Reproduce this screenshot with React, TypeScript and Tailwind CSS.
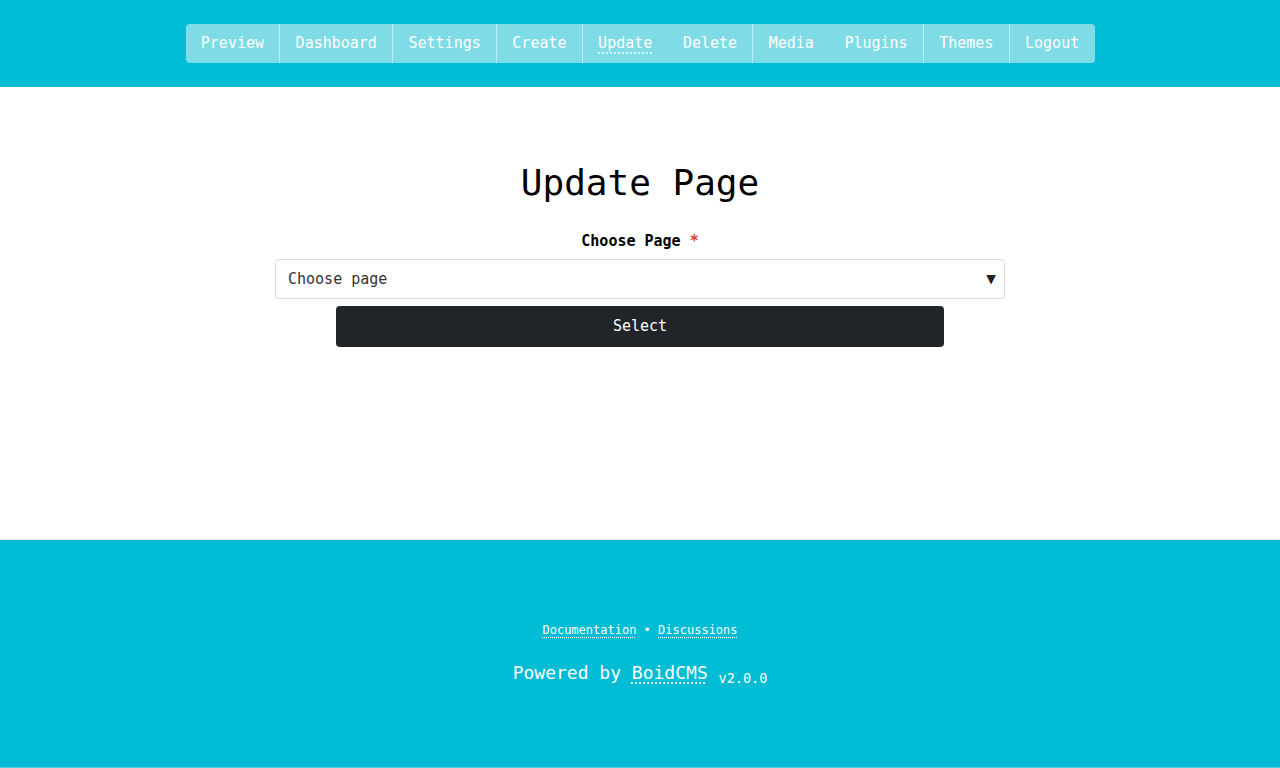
const NAV = [
  { label: 'Preview', border: false },
  { label: 'Dashboard', border: true },
  { label: 'Settings', border: true },
  { label: 'Create', border: true },
  { label: 'Update', border: true, active: true },
  { label: 'Delete', border: false },
  { label: 'Media', border: true },
  { label: 'Plugins', border: false },
  { label: 'Themes', border: true },
  { label: 'Logout', border: true },
];

export default function App() {
  return (
    <div className="flex flex-col min-h-[768px] bg-white font-['DejaVu_Sans_Mono',monospace]">
      <header className="bg-[#00bcd4] h-[87px] flex justify-center pt-6">
        <nav className="flex h-[39px] rounded-[4px] bg-[#7fdbe6] text-[15px] text-white">
          {NAV.map((item) => (
            <a
              key={item.label}
              className={
                'flex items-center px-[15.3px] ' +
                (item.border ? 'border-l border-[#bfeef4] ' : '') +
                (item.active ? 'underline decoration-dotted underline-offset-[4px]' : '')
              }
            >
              {item.label}
            </a>
          ))}
        </nav>
      </header>

      <main className="flex flex-col items-center pt-[74px] h-[453px] border-b border-[#e2e2e2]">
        <h1 className="text-[36px] leading-[43px] text-black">Update Page</h1>
        <label className="mt-[26px] text-[15px] leading-[22px] font-bold text-black">
          Choose Page <span className="text-[#e53935]">*</span>
        </label>
        <div className="mt-[7px] w-[730px] h-10 flex items-center justify-between pl-3 pr-[8px] border border-[#dcdcdc] rounded-[4px] text-[15px] text-[#333]">
          <span>Choose page</span>
          <span className="text-[16px] text-[#222]">▼</span>
        </div>
        <button
          type="button"
          className="mt-[7px] w-[608px] h-[41px] rounded-[4px] bg-[#212529] text-white text-[15px]"
        >
          Select
        </button>
      </main>

      <footer className="bg-[#00bcd4] h-[228px] pt-[81px] flex flex-col items-center text-white border-b border-[#4fd0e0]">
        <p className="text-[12px] leading-[18px]">
          <a className="underline decoration-dotted underline-offset-[3px]">Documentation</a>
          {' • '}
          <a className="underline decoration-dotted underline-offset-[3px]">Discussions</a>
        </p>
        <p className="mt-[20px] text-[18px] leading-[27px]">
          Powered by{' '}
          <a className="underline decoration-dotted underline-offset-[4px]">BoidCMS</a>{' '}
          <small className="text-[13.5px] align-[-4px]">v2.0.0</small>
        </p>
      </footer>
    </div>
  );
}
